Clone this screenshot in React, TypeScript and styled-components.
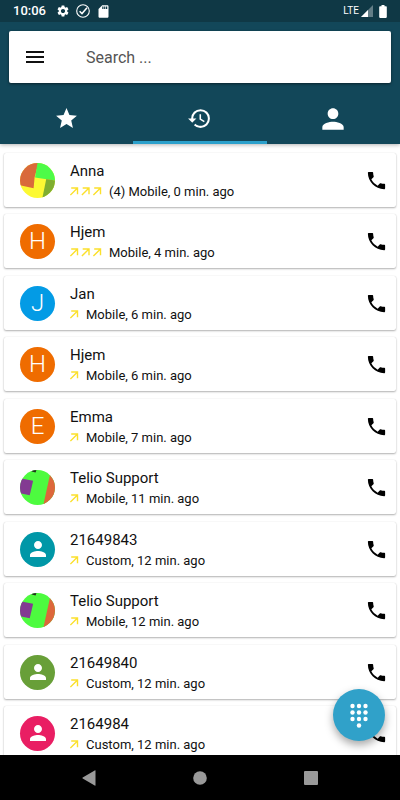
import React from "react";
import styled, { createGlobalStyle } from "styled-components";
import {
  MdHistory,
  MdMenu,
  MdPerson,
  MdPhone,
  MdSdCard,
  MdSettings,
  MdStar,
} from "react-icons/md";

const GlobalStyle = createGlobalStyle`
  * { box-sizing: border-box; }
  body {
    margin: 0;
    background: #ffffff;
    font-family: Roboto, "Noto Sans", sans-serif;
    color: #111111;
  }
  button, input { font: inherit; color: inherit; }
  svg { display: block; flex: none; }
`;

const Screen = styled.div`
  display: flex;
  flex-direction: column;
  height: 100vh;
  overflow: hidden;
`;

const Header = styled.header`
  position: relative;
  z-index: 1;
  flex: none;
  background: #124759;
  color: #ffffff;
  box-shadow: 0 1px 4px rgba(0, 0, 0, 0.3);
`;

const StatusBar = styled.div`
  display: flex;
  align-items: center;
  justify-content: space-between;
  height: 22px;
  padding: 0 13px;
  background: #0f3845;
`;

const StatusGroup = styled.div<{ $gap: number }>`
  display: flex;
  align-items: center;
  gap: ${(p) => p.$gap}px;
`;

const Clock = styled.time`
  margin-right: 4px;
  font-size: 13px;
  font-weight: 500;
  line-height: 22px;
`;

const Network = styled.span`
  font-size: 10px;
  line-height: 22px;
`;

const SearchBar = styled.form`
  display: flex;
  align-items: center;
  gap: 35px;
  height: 52px;
  margin: 9px 9px 0;
  padding: 0 16px 0 14px;
  border-radius: 2px;
  background: #ffffff;
  color: #111111;
  box-shadow: 0 1px 3px rgba(0, 0, 0, 0.5);
`;

const IconButton = styled.button`
  display: flex;
  align-items: center;
  justify-content: center;
  flex: none;
  padding: 0;
  border: 0;
  background: none;
  color: inherit;
  cursor: pointer;
`;

const PhoneButton = styled(IconButton)`
  color: #000000;
`;

const SearchInput = styled.input`
  flex: 1;
  min-width: 0;
  padding: 2px 4px 0;
  border: 0;
  outline: none;
  background: none;
  font-size: 16px;
  line-height: 24px;
  &::placeholder { color: #555555; opacity: 1; }
`;

const Tabs = styled.nav`
  display: grid;
  grid-template-columns: repeat(3, 1fr);
  height: 61px;
`;

const Tab = styled.button<{ $active?: boolean }>`
  display: flex;
  align-items: center;
  justify-content: center;
  padding: 13px 0 0;
  border: 0;
  border-bottom: 3px solid ${(p) => (p.$active ? "#2ba0cb" : "transparent")};
  background: none;
  color: #ffffff;
  cursor: pointer;
`;

const Content = styled.main`
  flex: 1;
  min-height: 0;
  overflow: hidden;
`;

const CallList = styled.ul`
  display: flex;
  flex-direction: column;
  margin: 0;
  padding: 9px 4px;
  list-style: none;
`;

const CallCard = styled.li`
  display: flex;
  align-items: center;
  flex: none;
  height: 54px;
  margin-bottom: 7px;
  padding: 0 8px 0 16px;
  border-radius: 2px;
  background: #ffffff;
  box-shadow: 0 1px 2px rgba(0, 0, 0, 0.3), 0 0 1px rgba(0, 0, 0, 0.14);
  &:nth-child(even) { margin-bottom: 8px; }
`;

const Avatar = styled.div<{ $color?: string }>`
  display: flex;
  align-items: center;
  justify-content: center;
  flex: none;
  width: 35px;
  height: 35px;
  border-radius: 50%;
  overflow: hidden;
  background: ${(p) => p.$color ?? "transparent"};
  color: #ffffff;
  font-size: 24px;
  font-weight: 300;
  line-height: 35px;
`;

const CallInfo = styled.div`
  flex: 1;
  min-width: 0;
  padding: 2px 0 0 15px;
`;

const Name = styled.div`
  font-size: 15px;
  line-height: 21px;
`;

const Detail = styled.div`
  display: flex;
  align-items: center;
  gap: 7px;
  font-size: 13px;
  line-height: 20px;
`;

const DialFab = styled.button`
  position: fixed;
  right: 15px;
  bottom: 59px;
  z-index: 2;
  display: flex;
  align-items: center;
  justify-content: center;
  width: 52px;
  height: 52px;
  padding: 2px 0 0;
  border: 0;
  border-radius: 50%;
  background: #30a1c9;
  box-shadow: 0 4px 8px rgba(0, 0, 0, 0.35);
  cursor: pointer;
`;

const SystemNav = styled.nav`
  display: flex;
  align-items: center;
  justify-content: center;
  gap: 95px;
  flex: none;
  height: 45px;
  background: #000000;
  color: #999999;
`;

const CheckCircle = () => (
  <svg width="14" height="14" viewBox="0 0 14 14" fill="none" stroke="currentColor">
    <circle cx="7" cy="7" r="6.3" strokeWidth="1.1" />
    <path d="M3.6 7.2 6 9.6 11 3.8" strokeWidth="1.5" />
  </svg>
);

const Signal = () => (
  <svg width="12" height="12" viewBox="0 0 12 12" fill="currentColor">
    <path d="M12 0v12H0z" opacity="0.35" />
    <path d="M7 5v7H0z" />
  </svg>
);

const Battery = () => (
  <svg width="8" height="13" viewBox="0 0 8 13" fill="currentColor">
    <path d="M2.5 0h3v1.3H7a.8.8 0 0 1 .8.8v10a.8.8 0 0 1-.8.8H1a.8.8 0 0 1-.8-.8v-10a.8.8 0 0 1 .8-.8h1.5z" />
  </svg>
);

const Arrows = ({ count }: { count: number }) => {
  const width = count === 3 ? 32 : 9;
  return (
    <svg width={width} height="9" viewBox={`0 0 ${width} 9`} fill="none" stroke="#fbe02c" strokeWidth="1.4">
      {Array.from({ length: count }, (_, i) => (
        <path key={i} transform={`translate(${i * 11.5} 0)`} d="M1.2 1h6.300v6.300M7.500 1 .4 8.100" />
      ))}
    </svg>
  );
};

const AnnaPicture = () => (
  <svg width="35" height="35" viewBox="0 0 36 36">
    <rect width="36" height="36" fill="#fcf933" />
    <path d="M0 0h19l-4 15-1 11L0 23z" fill="#d96a3b" />
    <path d="M18 0h18v18L15.500 15z" fill="#4dfb48" />
    <path d="M27 16.500 36 18v18H23z" fill="#7fae30" />
  </svg>
);

const TelioPicture = () => (
  <svg width="35" height="35" viewBox="0 0 36 36">
    <rect width="36" height="36" fill="#4dfb3f" />
    <path d="M0 8.500 13.500 11 10 26 0 24z" fill="#833a92" />
    <path d="M31 4h5v32H24z" fill="#dd673b" />
    <path d="M12 0h5l-1 2.500-4-1z" fill="#20301c" />
  </svg>
);

const Dialpad = () => (
  <svg width="18" height="26" viewBox="0 0 18 26" fill="#ffffff">
    {[2.5, 9, 15.5].map((x) =>
      [3, 9.5, 16].map((y) => <circle key={`${x}-${y}`} cx={x} cy={y} r="2.2" />)
    )}
    <circle cx="9" cy="22.500" r="2.2" />
  </svg>
);

type Face =
  | { kind: "letter"; letter: string; color: string }
  | { kind: "person"; color: string }
  | { kind: "anna" }
  | { kind: "telio" };

type Call = { name: string; arrows: number; detail: string; face: Face };

const calls: Call[] = [
  { name: "Anna", arrows: 3, detail: "(4) Mobile, 0 min. ago", face: { kind: "anna" } },
  { name: "Hjem", arrows: 3, detail: "Mobile, 4 min. ago", face: { kind: "letter", letter: "H", color: "#ef6c00" } },
  { name: "Jan", arrows: 1, detail: "Mobile, 6 min. ago", face: { kind: "letter", letter: "J", color: "#039be5" } },
  { name: "Hjem", arrows: 1, detail: "Mobile, 6 min. ago", face: { kind: "letter", letter: "H", color: "#ef6c00" } },
  { name: "Emma", arrows: 1, detail: "Mobile, 7 min. ago", face: { kind: "letter", letter: "E", color: "#ef6c00" } },
  { name: "Telio Support", arrows: 1, detail: "Mobile, 11 min. ago", face: { kind: "telio" } },
  { name: "21649843", arrows: 1, detail: "Custom, 12 min. ago", face: { kind: "person", color: "#0097a7" } },
  { name: "Telio Support", arrows: 1, detail: "Mobile, 12 min. ago", face: { kind: "telio" } },
  { name: "21649840", arrows: 1, detail: "Custom, 12 min. ago", face: { kind: "person", color: "#689f38" } },
  { name: "2164984", arrows: 1, detail: "Custom, 12 min. ago", face: { kind: "person", color: "#e91e63" } },
];

const CallAvatar = ({ face }: { face: Face }) => {
  switch (face.kind) {
    case "letter":
      return <Avatar $color={face.color}>{face.letter}</Avatar>;
    case "person":
      return <Avatar $color={face.color}><MdPerson size={24} /></Avatar>;
    case "anna":
      return <Avatar><AnnaPicture /></Avatar>;
    case "telio":
      return <Avatar><TelioPicture /></Avatar>;
  }
};

export default function App() {
  return (
    <Screen>
      <GlobalStyle />
      <Header>
        <StatusBar>
          <StatusGroup $gap={6}>
            <Clock>10:06</Clock>
            <MdSettings size={14} />
            <CheckCircle />
            <MdSdCard size={15} />
          </StatusGroup>
          <StatusGroup $gap={2}>
            <Network>LTE</Network>
            <StatusGroup $gap={6}>
              <Signal />
              <Battery />
            </StatusGroup>
          </StatusGroup>
        </StatusBar>
        <SearchBar role="search" onSubmit={(e) => e.preventDefault()}>
          <IconButton type="button" aria-label="Menu"><MdMenu size={24} /></IconButton>
          <SearchInput type="text" aria-label="Search" placeholder="Search ..." />
        </SearchBar>
        <Tabs>
          <Tab type="button" aria-label="Favourites"><MdStar size={25} /></Tab>
          <Tab type="button" aria-label="History" $active><MdHistory size={25} /></Tab>
          <Tab type="button" aria-label="Contacts"><MdPerson size={32} /></Tab>
        </Tabs>
      </Header>
      <Content>
        <CallList>
          {calls.map((call, i) => (
            <CallCard key={i}>
              <CallAvatar face={call.face} />
              <CallInfo>
                <Name>{call.name}</Name>
                <Detail>
                  <Arrows count={call.arrows} />
                  <span>{call.detail}</span>
                </Detail>
              </CallInfo>
              <PhoneButton type="button" aria-label={`Call ${call.name}`}><MdPhone size={23} /></PhoneButton>
            </CallCard>
          ))}
        </CallList>
      </Content>
      <DialFab type="button" aria-label="Dial pad"><Dialpad /></DialFab>
      <SystemNav>
        <IconButton type="button" aria-label="Back">
          <svg width="16" height="16" viewBox="0 0 16 16" fill="currentColor"><path d="M14.500.8v14.400a.5.5 0 0 1-.8.4L1.700 8.500a.6.6 0 0 1 0-1L13.700.4a.5.5 0 0 1 .8.4z" /></svg>
        </IconButton>
        <IconButton type="button" aria-label="Home">
          <svg width="16" height="16" viewBox="0 0 16 16" fill="currentColor"><circle cx="8" cy="8" r="6.800" /></svg>
        </IconButton>
        <IconButton type="button" aria-label="Recent apps">
          <svg width="16" height="16" viewBox="0 0 16 16" fill="currentColor"><rect x="1" y="1" width="14" height="14" rx="1" /></svg>
        </IconButton>
      </SystemNav>
    </Screen>
  );
}
